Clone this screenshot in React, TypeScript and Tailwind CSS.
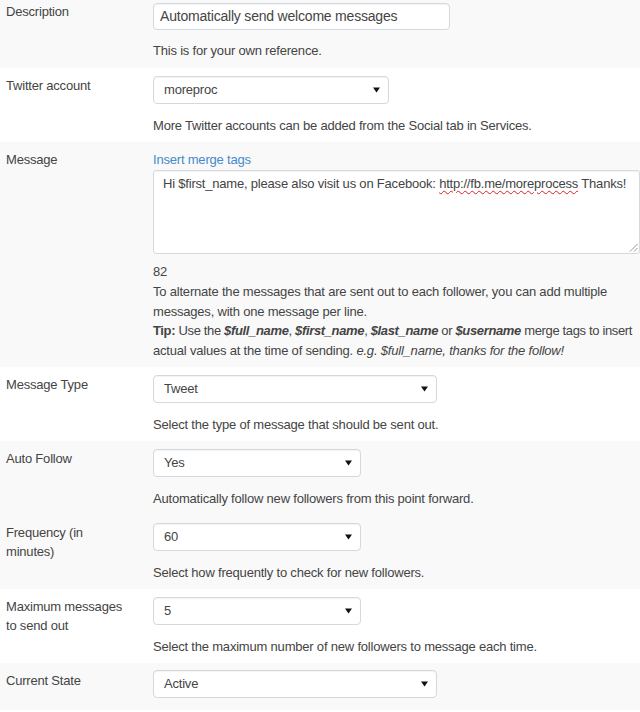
import React from "react";

function Arrow() {
  return (
    <svg width="7" height="6" viewBox="0 0 7 6" className="shrink-0">
      <path d="M0 0.5 H7 L3.5 5.5 Z" fill="#111" />
    </svg>
  );
}

function Select({ value, width }: { value: string; width: string }) {
  return (
    <div
      className={`${width} h-[28px] flex items-center justify-between border border-[#d3d9df] rounded-[4px] bg-white pl-[10px] pr-[8px] shadow-[inset_0_1px_1px_rgba(0,0,0,0.05)]`}
    >
      <span className="text-[#444]">{value}</span>
      <Arrow />
    </div>
  );
}

function Row({
  label,
  gray,
  children,
}: {
  label: React.ReactNode;
  gray?: boolean;
  children: React.ReactNode;
}) {
  return (
    <div className={`flex ${gray ? "bg-[#f9f9f9]" : "bg-white"}`}>
      <div className="w-[147px] shrink-0 pl-[6px] pt-[8px] leading-[19px] text-[#444]">{label}</div>
      <div className="flex-1 min-w-0 pl-[6px] pt-[8px] pb-[6px]">{children}</div>
    </div>
  );
}

function Help({ children }: { children: React.ReactNode }) {
  return <div className="mt-[12px] leading-[20px] text-[#444]">{children}</div>;
}

export default function App() {
  return (
    <div
      className="w-[640px] h-[712px] overflow-hidden bg-white text-[13px] tracking-[-0.2px] text-[#444]"
      style={{ fontFamily: '"Liberation Sans", Arial, sans-serif' }}
    >
      {/* Description */}
      <div className="flex bg-[#f9f9f9] h-[68px]">
        <div className="w-[147px] shrink-0 pl-[6px] pt-[2px] leading-[19px]">Description</div>
        <div className="flex-1 min-w-0 pl-[6px] pt-[3px]">
          <div className="w-[297px] h-[27px] flex items-center border border-[#d3d9df] rounded-[4px] bg-white pl-[6px] text-[14px] text-[#444] shadow-[inset_0_1px_1px_rgba(0,0,0,0.05)]">
            Automatically send welcome messages
          </div>
          <div className="mt-[11px] leading-[20px]">This is for your own reference.</div>
        </div>
      </div>

      <Row label="Twitter account">
        <Select value="moreproc" width="w-[236px]" />
        <Help>More Twitter accounts can be added from the Social tab in Services.</Help>
      </Row>

      {/* Message */}
      <div className="flex bg-[#f9f9f9] h-[225px]">
        <div className="w-[147px] shrink-0 pl-[6px] pt-[8px] leading-[19px]">Message</div>
        <div className="flex-1 min-w-0 pl-[6px] pt-[8px]">
          <div className="leading-[20px] text-[#428bca]">Insert merge tags</div>
          <div className="relative h-[84px] border border-[#d3d9df] rounded-[3px] bg-white pl-[9px] pt-[4px] leading-[18px] text-[#444] shadow-[inset_0_1px_1px_rgba(0,0,0,0.05)] whitespace-nowrap overflow-hidden">
            Hi $first_name, please also visit us on Facebook:{" "}
            <span className="underline decoration-wavy decoration-[#e02020] decoration-1 underline-offset-2">
              http://fb.me/moreprocess
            </span>{" "}
            Thanks!
            <svg width="9" height="9" viewBox="0 0 9 9" className="absolute right-[1px] bottom-[1px]">
              <path d="M8.5 1 L1 8.5 M8.5 5 L5 8.5" stroke="#999" strokeWidth="1" />
            </svg>
          </div>
          <div className="mt-[8px] leading-[20px]">82</div>
          <div className="leading-[19.5px]">
            To alternate the messages that are sent out to each follower, you can add multiple messages, with one
            message per line.
            <br />
            <span className="tracking-[-0.35px]">
              <b>Tip:</b> Use the <b><i>$full_name</i></b>, <b><i>$first_name</i></b>, <b><i>$last_name</i></b> or{" "}
              <b><i>$username</i></b> merge tags to insert
            </span>{" "}
            actual values at the time of sending. <i>e.g. $full_name, thanks for the follow!</i>
          </div>
        </div>
      </div>

      <Row label="Message Type">
        <Select value="Tweet" width="w-[284px]" />
        <Help>Select the type of message that should be sent out.</Help>
      </Row>

      <Row label="Auto Follow" gray>
        <Select value="Yes" width="w-[208px]" />
        <Help>Automatically follow new followers from this point forward.</Help>
      </Row>

      <Row
        label={
          <>
            Frequency (in
            <br />
            minutes)
          </>
        }
        gray
      >
        <Select value="60" width="w-[208px]" />
        <Help>Select how frequently to check for new followers.</Help>
      </Row>

      <Row
        label={
          <>
            Maximum messages
            <br />
            to send out
          </>
        }
      >
        <Select value="5" width="w-[208px]" />
        <Help>Select the maximum number of new followers to message each time.</Help>
      </Row>

      <div className="flex bg-[#f9f9f9] h-[47px]">
        <div className="w-[147px] shrink-0 pl-[6px] pt-[8px] leading-[19px]">Current State</div>
        <div className="flex-1 min-w-0 pl-[6px] pt-[7px]">
          <Select value="Active" width="w-[284px]" />
        </div>
      </div>
    </div>
  );
}
